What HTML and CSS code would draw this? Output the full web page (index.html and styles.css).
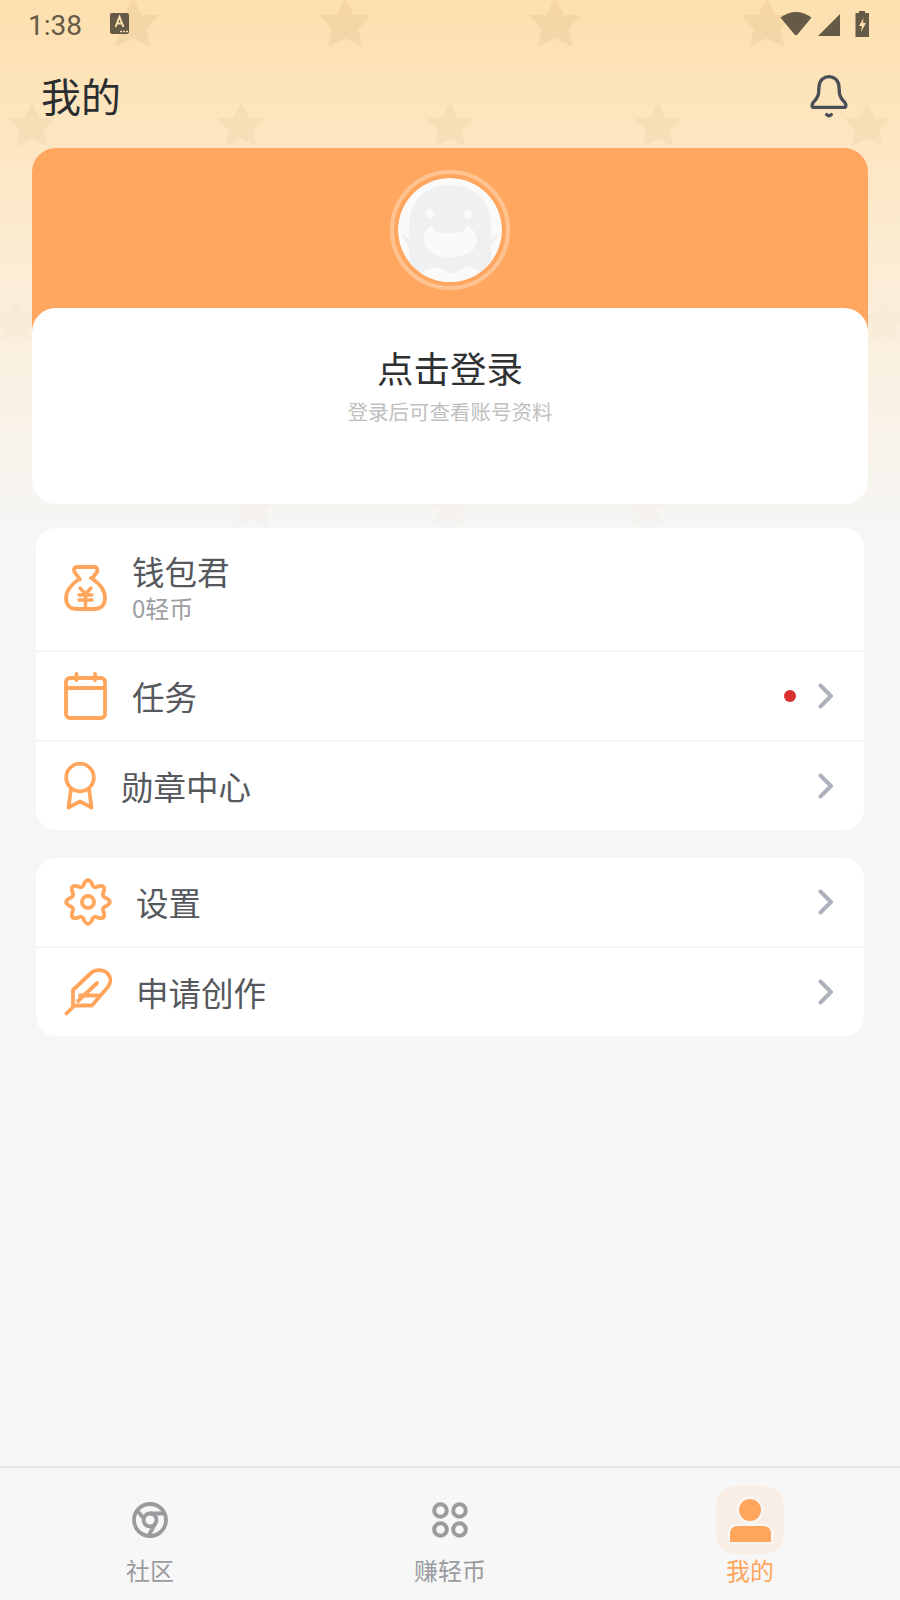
FILE: index.html
```html
<!DOCTYPE html>
<html lang="zh-CN">
<head>
    <meta charset="UTF-8">
    <meta name="viewport" content="width=device-width, initial-scale=1.0">
    <title>我的</title>
    <link rel="stylesheet" href="styles.css">
</head>
<body>
<div class="app">
    <!-- star wallpaper behind the header -->
    <div class="wallpaper">
        <svg width="900" height="560" viewBox="0 0 900 560">
            <defs>
                <polygon id="star" points="0,-24 8,-8 24,-8 12,5 16,21 0,13 -16,21 -12,5 -24,-8 -8,-8"/>
            </defs>
            <g class="stars stars-a">
                <use href="#star" x="133" y="24"/>
                <use href="#star" x="345" y="24"/>
                <use href="#star" x="555" y="24"/>
                <use href="#star" x="767" y="24"/>
            </g>
            <g class="stars stars-b">
                <use href="#star" transform="translate(32 126) scale(.9)"/>
                <use href="#star" transform="translate(241 126) scale(.9)"/>
                <use href="#star" transform="translate(450 126) scale(.9)"/>
                <use href="#star" transform="translate(658 126) scale(.9)"/>
                <use href="#star" transform="translate(867 126) scale(.9)"/>
            </g>
            <g class="stars stars-c">
                <use href="#star" transform="translate(16 322) scale(.9)"/>
                <use href="#star" transform="translate(884 322) scale(.9)"/>
                <use href="#star" transform="translate(253 506) scale(.9)"/>
                <use href="#star" transform="translate(449 506) scale(.9)"/>
                <use href="#star" transform="translate(647 506) scale(.9)"/>
            </g>
        </svg>
    </div>

    <div class="statusbar">
        <span class="clock">1:38</span>
        <svg class="status-a" width="19" height="21" viewBox="0 0 19 21">
            <rect x="0" y="0" width="19" height="21" rx="2" fill="#655a46"/>
            <path d="M5.500 14 L9.500 4 L13.500 14 M7 10.500 H12" fill="none" stroke="#fde0ae" stroke-width="2"/>
            <path d="M10 18.500h2M13 18.500h2M16 18.500h2" stroke="#fde0ae" stroke-width="1.500"/>
        </svg>
        <span class="status-gap"></span>
        <svg width="32" height="25" viewBox="0 0 32 25">
            <path d="M0.500 6.500 C10 -1 22 -1 31.500 6.500 L17.500 23.500 C16.700 24.400 15.300 24.400 14.500 23.500 Z" fill="#655a46"/>
        </svg>
        <svg class="status-signal" width="23" height="22" viewBox="0 0 23 22">
            <path d="M0 22 L22 0 V22 Z" fill="#655a46"/>
        </svg>
        <svg class="status-batt" width="15" height="26" viewBox="0 0 15 26">
            <path d="M4 0 H10 V2 H14 V26 H0.500 V2 H4 Z" fill="#655a46"/>
            <path d="M8.500 7 L4 15 H7 L6 21 L11 12 H8 Z" fill="#fde0ae"/>
        </svg>
    </div>

    <header class="topbar">
        <h1>我的</h1>
        <svg class="bell" width="38" height="46" viewBox="0 0 40 48" fill="none" stroke="#4a4f57" stroke-width="3.500" stroke-linecap="round" stroke-linejoin="round">
            <path d="M3.800 35 H36.200 C38 35 38.200 32 36.800 30 C33 26 31.500 24 31 20 L30.500 13 C29.500 -1 10.500 -1 9.500 13 L9 20 C8.500 24 7 26 3.200 30 C1.800 32 2 35 3.800 35 Z"/>
            <path d="M17.500 42.500 Q20 45 22.500 42.500"/>
        </svg>
    </header>

    <section class="profile">
        <div class="profile-top">
            <div class="avatar">
                <svg width="104" height="104" viewBox="0 0 104 104">
                    <circle cx="52" cy="52" r="52" fill="#fafafa"/>
                    <path d="M11 104 V50 C11 20 30 7 52 7 C74 7 93 20 93 50 V104 Z" fill="#f0f0f0"/>
                    <path d="M2 55 L13 62 V72 Z M102 55 L91 62 V72 Z" fill="#f0f0f0"/>
                    <circle cx="32" cy="36" r="4.500" fill="#fafafa"/>
                    <circle cx="70" cy="36" r="4.500" fill="#fafafa"/>
                    <path d="M26 62 C26 54 29 51 34 47 L37 53 C46 56 57 56 66 53 L69 47 C74 51 79 54 79 62 C79 73 68 79 52 79 C36 79 26 73 26 62 Z" fill="#fafafa"/>
                    <path d="M14 104 C22 94 32 88 42 90 C48 92 50 96 54 96 C58 96 60 91 68 89 C76 88 84 94 90 104 Z" fill="#fafafa"/>
                </svg>
            </div>
        </div>
        <div class="profile-body">
            <div class="login-title">点击登录</div>
            <div class="login-sub">登录后可查看账号资料</div>
        </div>
    </section>

    <section class="group group-first">
        <div class="row row-wallet">
            <svg class="icon icon-std" width="43" height="46" viewBox="0 0 43 46" fill="none" stroke="#ffa55c" stroke-width="3.800" stroke-linecap="round" stroke-linejoin="round">
                <path d="M16 14.500 L10.500 7 C9 4 10.500 2 13 2 H30 C33 2 34 4 33 7 L28.500 13"/>
                <path d="M15 14 C8 19 2 25 2 33 C2 41 7 44 13 44 H30 C36 44 41 41 41 33 C41 25 35 18 27 13"/>
                <path d="M16 23 L21.500 29 L27 23 M15 30 H28 M15 35 H28 M21.500 29 V41" stroke-width="3.400"/>
            </svg>
            <div class="wallet-text">
                <div class="row-label">钱包君</div>
                <div class="wallet-sub">0轻币</div>
            </div>
        </div>
        <div class="row row-short">
            <svg class="icon icon-std" width="43" height="48" viewBox="0 0 43 48" fill="none" stroke="#ffa55c" stroke-width="3.800" stroke-linecap="round" stroke-linejoin="round">
                <rect x="2" y="6" width="39" height="40" rx="4"/>
                <path d="M2 16 H41 M12.500 2 V8 M31 2 V8"/>
            </svg>
            <div class="row-label row-grow">任务</div>
            <span class="dot"></span>
            <svg class="chevron" width="16" height="26" viewBox="0 0 16 26"><path d="M2.500 2.500 L13 13 L2.500 23.500"/></svg>
        </div>
        <div class="row row-short">
            <svg class="icon icon-medal" width="32" height="48" viewBox="0 0 32 48" fill="none" stroke="#ffa55c" stroke-width="3.800" stroke-linecap="round" stroke-linejoin="round">
                <circle cx="16" cy="15.500" r="13.800"/>
                <path d="M7 27 L4.500 45.500 L16 39.500 L27.500 45.500 L25 27"/>
            </svg>
            <div class="row-label row-grow">勋章中心</div>
            <svg class="chevron" width="16" height="26" viewBox="0 0 16 26"><path d="M2.500 2.500 L13 13 L2.500 23.500"/></svg>
        </div>
    </section>

    <section class="group">
        <div class="row row-short">
            <svg class="icon icon-wide" width="48" height="48" viewBox="0 0 48 48" fill="none" stroke="#ffa55c" stroke-width="3.800" stroke-linecap="round" stroke-linejoin="round">
                <path d="M20.290 5.360 Q24 -1 27.710 5.360 Q29.360 11.070 34.560 8.200 Q41.680 6.320 39.800 13.440 Q36.930 18.640 42.640 20.290 Q49 24 42.640 27.710 Q36.930 29.360 39.800 34.560 Q41.680 41.680 34.560 39.800 Q29.360 36.930 27.710 42.640 Q24 49 20.290 42.640 Q18.640 36.930 13.440 39.800 Q6.320 41.680 8.200 34.560 Q11.070 29.360 5.360 27.710 Q-1 24 5.360 20.290 Q11.070 18.640 8.200 13.440 Q6.320 6.320 13.440 8.200 Q18.640 11.070 20.290 5.360 Z"/>
                <circle cx="24" cy="24" r="6"/>
            </svg>
            <div class="row-label row-grow">设置</div>
            <svg class="chevron" width="16" height="26" viewBox="0 0 16 26"><path d="M2.500 2.500 L13 13 L2.500 23.500"/></svg>
        </div>
        <div class="row row-short">
            <svg class="icon icon-wide" width="48" height="48" viewBox="0 0 48 48" fill="none" stroke="#ffa55c" stroke-width="3.800" stroke-linecap="round" stroke-linejoin="round">
                <path d="M2.500 45.500 L9 39 M9 37.500 V22 L27 5 C32 1 40 1 44 6 C48 11 47 15 43 20 L28 37.500 Z"/>
                <path d="M14 33 L33 15 M16 27.500 H36"/>
            </svg>
            <div class="row-label row-grow">申请创作</div>
            <svg class="chevron" width="16" height="26" viewBox="0 0 16 26"><path d="M2.500 2.500 L13 13 L2.500 23.500"/></svg>
        </div>
    </section>

    <nav class="tabbar">
        <div class="tab">
            <div class="tab-icon">
                <svg width="36" height="36" viewBox="0 0 36 36" fill="none" stroke="#9a9b9e" stroke-width="3.800" stroke-linecap="round" stroke-linejoin="round">
                    <circle cx="18" cy="18" r="16"/>
                    <circle cx="18" cy="18" r="6.500"/>
                    <path d="M11.500 16 L5.500 9 M18 11.500 H31 M23.500 21 L17 33"/>
                </svg>
            </div>
            <span>社区</span>
        </div>
        <div class="tab">
            <div class="tab-icon">
                <svg width="36" height="36" viewBox="0 0 36 36" fill="none" stroke="#9a9b9e" stroke-width="4">
                    <circle cx="8.500" cy="8.500" r="6.300"/>
                    <circle cx="27.500" cy="8.500" r="6.300"/>
                    <circle cx="8.500" cy="27.500" r="6.300"/>
                    <circle cx="27.500" cy="27.500" r="6.300"/>
                </svg>
            </div>
            <span>赚轻币</span>
        </div>
        <div class="tab tab-on">
            <div class="tab-icon">
                <svg width="68" height="68" viewBox="0 0 68 68" class="person">
                    <circle cx="34" cy="24" r="11"/>
                    <path d="M14 56 V48 Q14 40 22 40 H47 Q55 40 55 48 V56 Z"/>
                </svg>
            </div>
            <span>我的</span>
        </div>
    </nav>
</div>
</body>
</html>
```

FILE: styles.css
```css
* {
    box-sizing: border-box;
}
html, body {
    margin: 0;
    padding: 0;
}
body {
    font-family: "Noto Sans CJK SC", "Noto Sans", sans-serif;
    background-color: #f6f6f6;
}
.app {
    position: relative;
    width: 900px;
    height: 1600px;
    overflow: hidden;
    display: flex;
    flex-direction: column;
    background-color: #f6f6f6;
}
.wallpaper {
    position: absolute;
    top: 0;
    left: 0;
    width: 900px;
    height: 560px;
    background: linear-gradient(#fde0ae 0, #fde6c2 150px, #fbeed9 300px, #f6f6f6 540px);
}
.stars {
    fill: #b08a50;
    stroke: #b08a50;
    stroke-width: 2;
    stroke-linejoin: round;
}
.stars-a {
    opacity: 0.1;
}
.stars-b {
    opacity: 0.07;
}
.stars-c {
    opacity: 0.025;
}
.statusbar {
    position: relative;
    height: 50px;
    display: flex;
    align-items: center;
    padding: 0 30px 3px 28px;
    color: #655a46;
}
.clock {
    font-family: Roboto, sans-serif;
    font-size: 28px;
    margin-top: 3px;
}
.status-a {
    margin-left: 28px;
}
.status-gap {
    flex: 1;
}
.status-signal {
    margin-left: 6px;
    margin-top: 3px;
}
.status-batt {
    margin-left: 14px;
}
.topbar {
    position: relative;
    height: 98px;
    display: flex;
    align-items: center;
    justify-content: space-between;
    padding: 0 52px 8px 41px;
}
.topbar h1 {
    margin: 0;
    font-size: 40px;
    font-weight: 400;
    color: #2a2d30;
}
.bell {
    margin-top: 4px;
}
.profile {
    position: relative;
    margin: 0 32px;
    height: 356px;
    display: flex;
    flex-direction: column;
}
.profile-top {
    height: 184px;
    flex: none;
    display: flex;
    justify-content: center;
    padding-top: 22px;
    background-color: #ffa760;
    border-radius: 24px 24px 0 0;
}
.avatar {
    width: 120px;
    height: 120px;
    border-radius: 50%;
    border: 4px solid #ffc392;
    padding: 4px;
}
.avatar svg {
    display: block;
    border-radius: 50%;
}
.profile-body {
    position: relative;
    flex: 1;
    margin-top: -24px;
    background-color: #fff;
    border-radius: 24px;
    text-align: center;
    padding-top: 37px;
}
.login-title {
    font-size: 36.500px;
    line-height: 46px;
    color: #2e3032;
}
.login-sub {
    margin-top: 7px;
    font-size: 20.500px;
    line-height: 26px;
    color: #c0c0c0;
}
.group {
    position: relative;
    margin: 28px 36px 0;
    border-radius: 20px;
    background-color: #fff;
}
.group-first {
    margin-top: 24px;
}
.row {
    display: flex;
    align-items: center;
    padding-left: 28px;
    padding-right: 30px;
    border-top: 2px solid #f5f5f5;
}
.row:first-child {
    border-top: 0;
}
.row-wallet {
    height: 122px;
    align-items: flex-start;
    padding-top: 37px;
}
.row-short {
    height: 90px;
}
.row:first-child.row-short {
    height: 88px;
}
.icon {
    flex: none;
}
.icon-std {
    margin-right: 25px;
}
.icon-medal {
    margin-right: 25px;
}
.icon-wide {
    margin-right: 24px;
}
.wallet-text {
    margin-top: -14px;
}
.row-label {
    font-size: 32.500px;
    line-height: 40px;
    color: #55585c;
}
.row-grow {
    flex: 1;
}
.wallet-sub {
    margin-top: 4px;
    font-size: 24px;
    line-height: 26px;
    color: #9c9ea2;
}
.dot {
    width: 12px;
    height: 12px;
    border-radius: 50%;
    background-color: #d93030;
    margin-right: 22px;
}
.chevron {
    fill: none;
    stroke: #adb1bc;
    stroke-width: 4;
    stroke-linecap: round;
    stroke-linejoin: round;
}
.tabbar {
    position: absolute;
    left: 0;
    right: 0;
    bottom: 0;
    height: 134px;
    display: grid;
    grid-template-columns: repeat(3, 300px);
    border-top: 2px solid #e6e6e6;
    background-color: #f7f7f7;
}
.tab {
    display: flex;
    flex-direction: column;
    align-items: center;
    padding-top: 18px;
    color: #9a9b9e;
    font-size: 24px;
    line-height: 32px;
}
.tab-icon {
    width: 68px;
    height: 68px;
    border-radius: 20px;
    display: flex;
    align-items: center;
    justify-content: center;
}
.tab-on {
    color: #ffa55c;
}
.tab-on .tab-icon {
    background-color: #f8eee6;
}
.person {
    fill: #ffa55c;
    stroke: #f8f6f3;
    stroke-width: 5;
    paint-order: stroke;
}
```
